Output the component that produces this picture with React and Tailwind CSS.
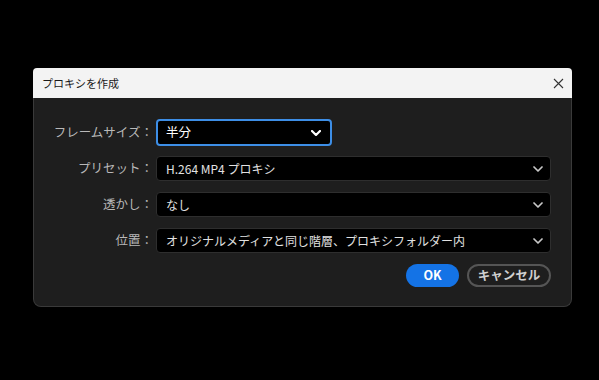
const font = { fontFamily: '"Noto Sans CJK JP", "Noto Sans", sans-serif' };

function Chevron({ strong }) {
  return (
    <svg width="10" height="6" viewBox="0 0 10 6" className="shrink-0">
      <path
        d="M1 1 L5 5 L9 1"
        fill="none"
        stroke={strong ? "#ffffff" : "#c8c8c8"}
        strokeWidth={strong ? 2.2 : 1.7}
        strokeLinecap="round"
        strokeLinejoin="round"
      />
    </svg>
  );
}

function Row({ label, value, active }) {
  return (
    <div className="flex items-center">
      <div className="w-[122px] pr-[3px] text-right text-[12.5px] text-[#b9b9b9] leading-none">
        {label}
      </div>
      {active ? (
        <div className="w-[176px] h-[27px] rounded-[4px] border-2 border-[#3d8ee6] bg-black flex items-center justify-between pl-[8px] pr-[9px]">
          <span className="text-[12.5px] text-white leading-none">{value}</span>
          <Chevron strong />
        </div>
      ) : (
        <div className="w-[395px] h-[25px] rounded-[4px] border border-[#2e2e2e] bg-black flex items-center justify-between pl-[9px] pr-[7px]">
          <span className="text-[12px] text-[#e2e2e2] leading-none">{value}</span>
          <Chevron />
        </div>
      )}
    </div>
  );
}

export default function App() {
  return (
    <div className="w-[599px] h-[380px] bg-black pt-[68px] pl-[33px]" style={font}>
      <div className="w-[539px]">
        {/* Title bar */}
        <div className="h-[30px] bg-[#f3f3f3] rounded-t-[4px] flex items-center justify-between pl-[9px] pr-[8px]">
          <span className="text-[11px] text-[#1a1a1a]">プロキシを作成</span>
          <svg width="11" height="11" viewBox="0 0 11 11">
            <path d="M1 1 L10 10 M10 1 L1 10" stroke="#333" strokeWidth="1.1" />
          </svg>
        </div>

        {/* Body */}
        <div className="bg-[#1e1e1e] border border-t-0 border-[#3a3a3a] rounded-b-[8px] pt-[21px] pb-[19px]">
          <div className="flex flex-col gap-[11px]">
            <div className="mb-[-1px]">
              <Row label="フレームサイズ：" value="半分" active />
            </div>
            <Row label="プリセット：" value="H.264 MP4 プロキシ" />
            <Row label="透かし：" value="なし" />
            <Row label="位置：" value="オリジナルメディアと同じ階層、プロキシフォルダー内" />
          </div>
          <div className="flex justify-end gap-[8px] pr-[20px] mt-[11px]">
            <button className="w-[53px] h-[23px] rounded-full bg-[#1473e6] text-white text-[12.5px] font-bold leading-none">
              OK
            </button>
            <button className="w-[84px] h-[23px] rounded-full border-2 border-[#555555] text-[#cfcfcf] text-[12.5px] font-bold leading-none">
              キャンセル
            </button>
          </div>
        </div>
      </div>
    </div>
  );
}
